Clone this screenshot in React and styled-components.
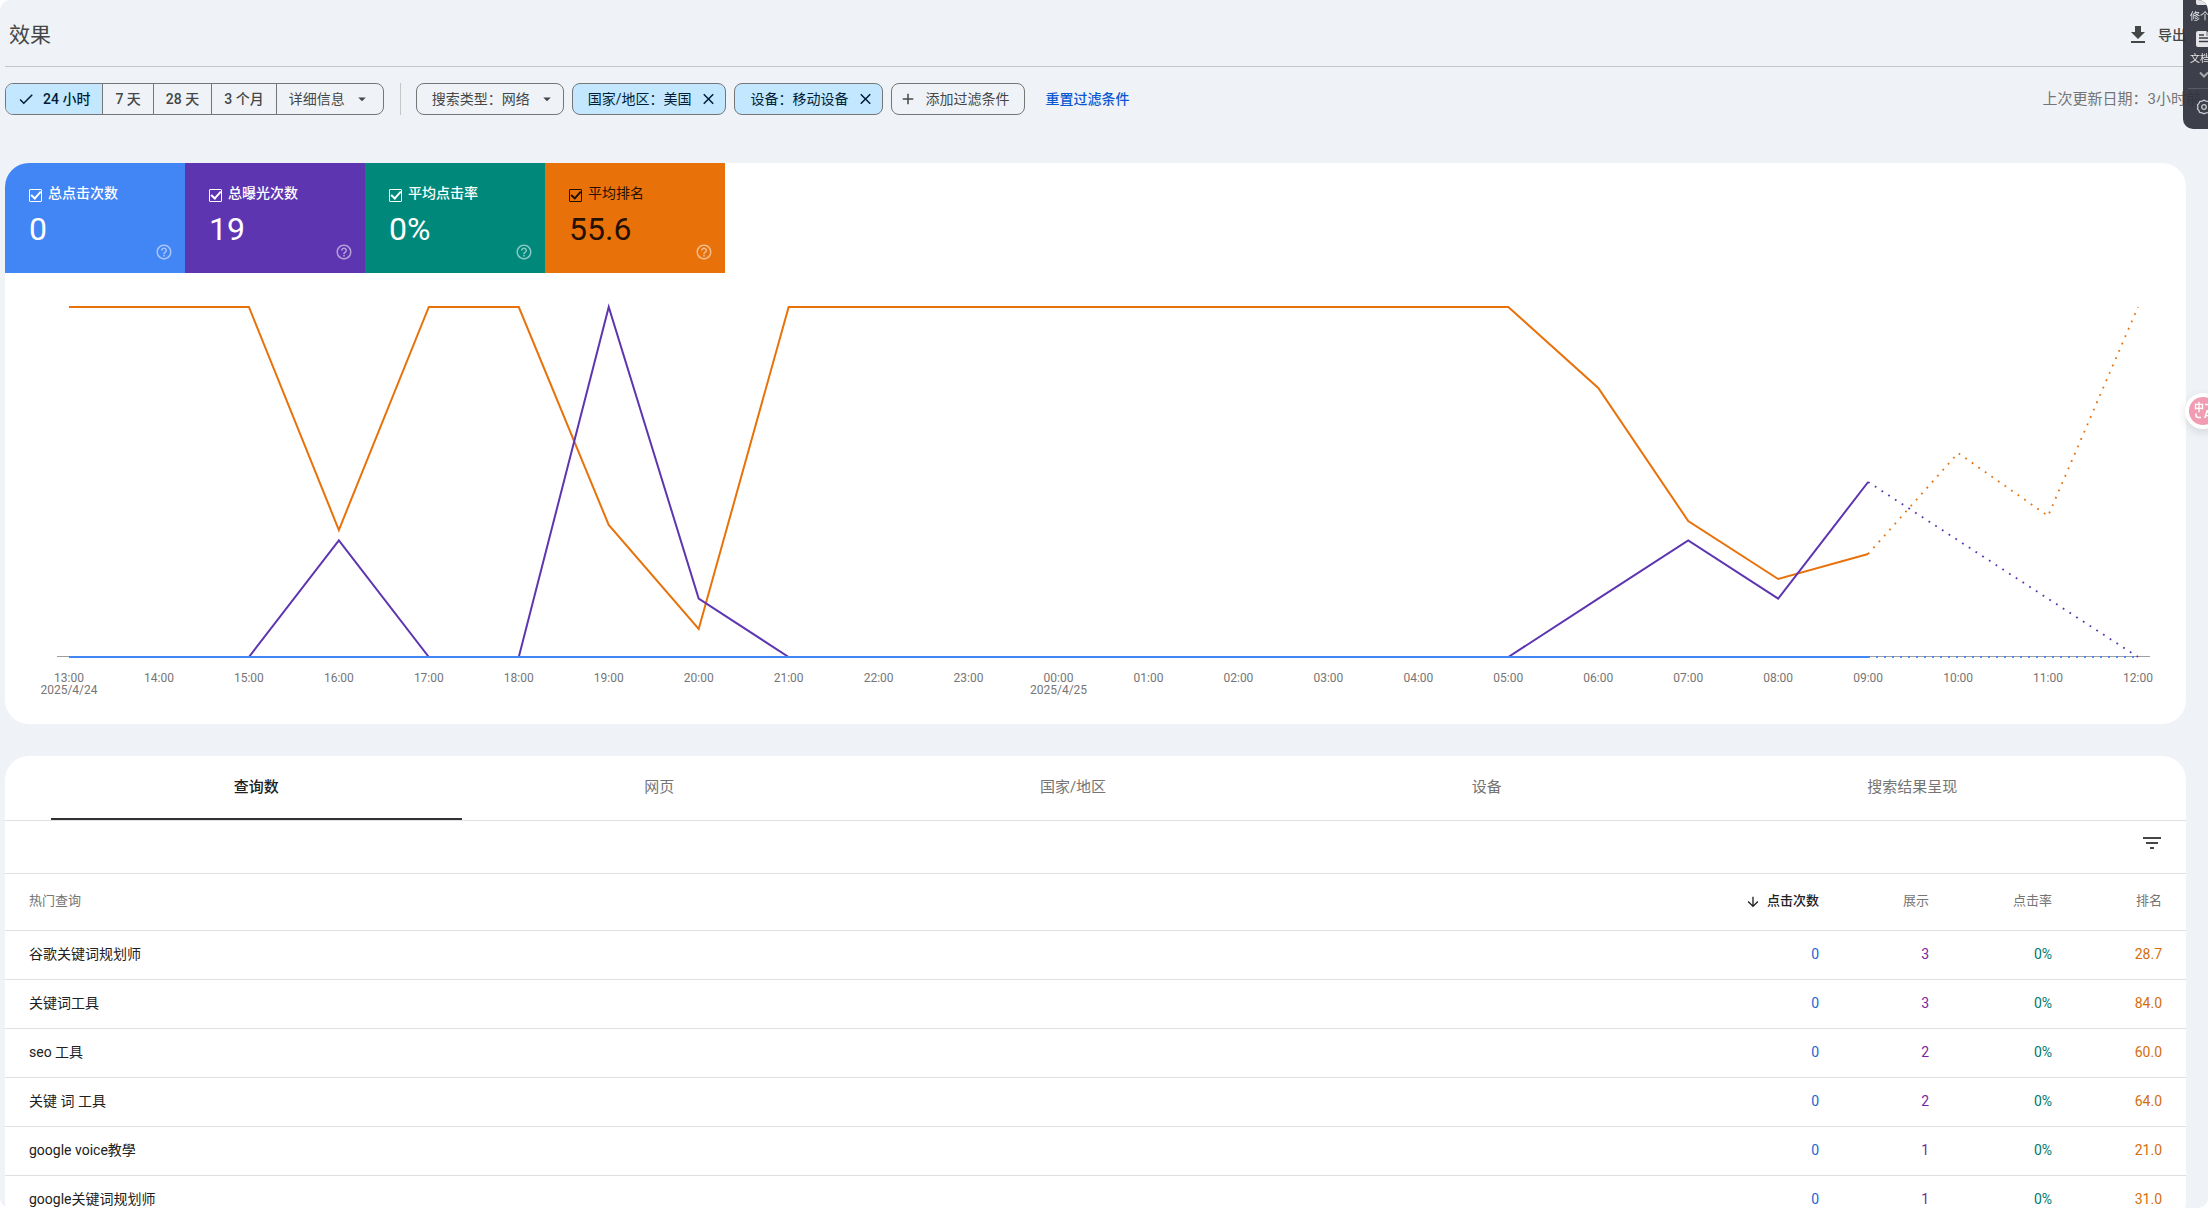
import React from "react";
import styled, { createGlobalStyle } from "styled-components";

const GlobalStyle = createGlobalStyle`
  * {
    box-sizing: border-box;
  }

  body {
    margin: 0;
    background: #fff;
    color: #1f1f1f;
    font-family: Roboto, "Noto Sans CJK SC", sans-serif;
    font-size: 14px;
    line-height: 20px;
    overflow: hidden;
  }

  button, input {
    font: inherit;
    color: inherit;
  }
`;

const Page = styled.main`
  height: 100vh;
  overflow: hidden;
  padding: 0 22px 0 5px;
  border-radius: 10px;
  background: #eff3f8;
`;

const Header = styled.header`
  display: flex;
  align-items: center;
  justify-content: space-between;
  height: 67px;
  padding: 4px 0 0 4px;
  border-bottom: 1px solid #c4c7c5;
  color: #444746;
`;

const Title = styled.h1`
  margin: 0;
  font-size: 21px;
  font-weight: 400;
`;

const ExportButton = styled.button`
  display: flex;
  align-items: center;
  gap: 8px;
  padding: 0;
  border: none;
  background: none;
  font-weight: 500;
`;

const Toolbar = styled.div`
  display: flex;
  align-items: center;
  padding-top: 16px;
  color: #444746;
`;

const Segments = styled.div`
  display: flex;
  height: 32px;
  border: 1px solid #747775;
  border-radius: 8px;
  overflow: hidden;
`;

const Segment = styled.button`
  display: flex;
  align-items: center;
  gap: 8px;
  padding: 0 12px;
  border: none;
  border-right: 1px solid #747775;
  background: ${(props) => (props.$active ? "#c2e7ff" : "transparent")};
  color: ${(props) => (props.$active ? "#001d35" : "inherit")};
  font-weight: 500;

  &:first-child {
    padding-left: 11px;
  }

  &:last-child {
    border-right: none;
    font-weight: 400;
  }
`;

const Divider = styled.div`
  width: 1px;
  height: 32px;
  margin: 0 15px 0 16px;
  background: #c4c7c5;
`;

const Chips = styled.div`
  display: flex;
  gap: 8px;
`;

const Chip = styled.button`
  display: flex;
  align-items: center;
  gap: 8px;
  height: 32px;
  padding: ${(props) => (props.$lead ? "0 15px 0 7px" : "0 7px 0 15px")};
  border: 1px solid #747775;
  border-radius: 8px;
  background: ${(props) => (props.$active ? "#c2e7ff" : "transparent")};
  color: ${(props) => (props.$active ? "#001d35" : "inherit")};

  svg {
    width: ${(props) => (props.$active ? "19px" : "18px")};
  }
`;

const ResetLink = styled.a`
  margin-left: 20px;
  color: #0b57d0;
  font-weight: 500;
  text-decoration: none;
`;

const Updated = styled.span`
  margin: 0 -15px 0 auto;
  color: #757575;
  font-size: 15px;
`;

const Card = styled.section`
  margin-top: ${(props) => props.$top};
  border-radius: 24px;
  background: #fff;
  overflow: hidden;
`;

const Metrics = styled.div`
  display: flex;
`;

const Metric = styled.label`
  display: grid;
  grid-template-columns: 1fr auto;
  grid-template-rows: 20px 40px 18px;
  width: 180px;
  height: 110px;
  padding: 20px 12px 0 24px;
  background: ${(props) => props.$color};
  color: ${(props) => (props.$dark ? "rgba(0, 0, 0, 0.87)" : "#fff")};
`;

const MetricName = styled.span`
  grid-column: 1 / 3;
  display: flex;
  align-items: center;
  gap: 6px;
  font-weight: ${(props) => (props.$dark ? 400 : 500)};
`;

const Check = styled.input`
  appearance: none;
  display: grid;
  place-items: center;
  width: 13px;
  height: 13px;
  margin: 4px 0 0;
  border: 1px solid currentColor;
  border-radius: 1px;

  &:checked::before {
    content: "";
    width: 8px;
    height: 4px;
    border: solid currentColor;
    border-width: 0 0 2px 2px;
    transform: translateY(-1px) rotate(-48deg);
  }
`;

const MetricValue = styled.span`
  grid-column: 1 / 3;
  align-self: end;
  font-size: 32px;
  line-height: 28px;
`;

const Help = styled.svg`
  grid-column: 2;
  color: rgba(255, 255, 255, 0.54);
`;

const Chart = styled.svg`
  display: block;
  width: 100%;
  height: auto;
`;

const AxisLabel = styled.text`
  fill: #757575;
  font-size: 12px;
  text-anchor: middle;
`;

const Tabs = styled.div`
  display: flex;
  height: 65px;
  padding: 0 46px;
  border-bottom: 1px solid #e0e0e0;
`;

const Tab = styled.button`
  flex: 1 1 auto;
  padding: 0;
  border: none;
  border-bottom: 2px solid ${(props) => (props.$active ? "#303134" : "transparent")};
  background: none;
  color: ${(props) => (props.$active ? "#212121" : "#757575")};
  font-size: 15px;
  font-weight: ${(props) => (props.$active ? 500 : 400)};
`;

const TableBar = styled.div`
  display: flex;
  justify-content: flex-end;
  align-items: center;
  height: 53px;
  padding: 0 22px 8px;
  border-bottom: 1px solid #e0e0e0;
`;

const IconButton = styled.button`
  display: flex;
  padding: 0;
  border: none;
  background: none;
  color: #444746;
`;

const Table = styled.table`
  width: 100%;
  border-collapse: separate;
  border-spacing: 0;
`;

const HeadCell = styled.th`
  width: ${(props) => props.$width || "auto"};
  height: 57px;
  padding: 0 24px 2px;
  border-bottom: 1px solid #e0e0e0;
  color: ${(props) => (props.$sorted ? "#212121" : "#757575")};
  font-size: 13px;
  font-weight: ${(props) => (props.$sorted ? 500 : 400)};
  text-align: ${(props) => (props.$width ? "right" : "left")};

  svg {
    margin-right: 6px;
    vertical-align: middle;
  }
`;

const Cell = styled.td`
  height: 49px;
  padding: 0 24px 2px;
  border-bottom: 1px solid #e0e0e0;
  color: ${(props) => props.$color || "#212121"};
  text-align: ${(props) => (props.$color ? "right" : "left")};
`;

const SidePanel = styled.aside`
  position: fixed;
  top: 0;
  right: 0;
  width: 25px;
  height: 129px;
  padding-left: 5px;
  border-radius: 0 10px 0 10px;
  background: rgba(47, 48, 61, 0.93);
  color: #e8e8ea;
  overflow: hidden;
`;

const PanelItem = styled.button`
  display: block;
  padding: 0;
  border: none;
  background: none;
  font-size: 10px;
  line-height: 14px;
  white-space: nowrap;

  svg {
    display: block;
    margin: 0 0 5px 8px;
  }
`;

const PanelRule = styled.hr`
  margin: 5px 0 10px;
  border: none;
  border-top: 1px solid #5a5b66;
`;

const Translate = styled.button`
  position: fixed;
  top: 393px;
  right: -13px;
  display: grid;
  place-items: center;
  width: 36px;
  height: 36px;
  padding: 0;
  border: none;
  border-radius: 50%;
  background: #fff;
  box-shadow: 0 3px 10px rgba(0, 0, 0, 0.12);
`;

const metrics = [
  { name: "总点击次数", value: "0", color: "#4285f4" },
  { name: "总曝光次数", value: "19", color: "#5e35b1" },
  { name: "平均点击率", value: "0%", color: "#00897b" },
  { name: "平均排名", value: "55.6", color: "#e8710a", dark: true },
];

const tabs = ["查询数", "网页", "国家/地区", "设备", "搜索结果呈现"];

const rows = [
  ["谷歌关键词规划师", "0", "3", "0%", "28.7"],
  ["关键词工具", "0", "3", "0%", "84.0"],
  ["seo 工具", "0", "2", "0%", "60.0"],
  ["关键 词 工具", "0", "2", "0%", "64.0"],
  ["google voice教學", "0", "1", "0%", "21.0"],
  ["google关键词规划师", "0", "1", "0%", "31.0"],
];

const cellColors = [null, "#1967d2", "#7b1fa2", "#00796b", "#d56e0c"];

// y coordinates inside the chart
const TOP = 34;
const AXIS = 384;
const position = [
  34, 34, 34, 257, 34, 34, 252, 356, 34, 34, 34, 34, 34, 34, 34, 34, 34, 115,
  248, 306, 281, 180, 243, 34,
];
const impressions = [
  0, 0, 0, 2, 0, 0, 6, 1, 0, 0, 0, 0, 0, 0, 0, 0, 0, 1, 2, 1, 3, 2, 1, 0,
].map((n) => AXIS - (n * (AXIS - TOP)) / 6);
const clicks = position.map(() => AXIS);
const LAST_FINAL = 20;

const xOf = (i) => 64 + (i * 2069) / 23;

const Line = ({ data, color }) => {
  const points = data.map((y, i) => `${xOf(i)},${y}`);
  return (
    <g fill="none" stroke={color} strokeWidth="2">
      <polyline points={points.slice(0, LAST_FINAL + 1).join(" ")} />
      <polyline
        points={points.slice(LAST_FINAL).join(" ")}
        strokeWidth="1.8"
        strokeDasharray="1.8 6.2"
      />
    </g>
  );
};

const hourLabel = (i) => `${String((13 + i) % 24).padStart(2, "0")}:00`;

const PerformanceChart = () => (
  <Chart viewBox="0 0 2181 451" role="img" aria-label="效果">
    <path d="M52 383.5H2145" stroke="#9e9e9e" />
    <Line data={position} color="#e8710a" />
    <Line data={impressions} color="#5e35b1" />
    <Line data={clicks} color="#4285f4" />
    {position.map((_, i) => (
      <AxisLabel key={i} x={xOf(i)} y="409">
        {hourLabel(i)}
      </AxisLabel>
    ))}
    <AxisLabel x={xOf(0)} y="421">2025/4/24</AxisLabel>
    <AxisLabel x={xOf(11)} y="421">2025/4/25</AxisLabel>
  </Chart>
);

const Icon = ({ d, size = 18 }) => (
  <svg width={size} height={size} viewBox="0 0 24 24" fill="currentColor" aria-hidden="true">
    <path d={d} />
  </svg>
);

const CHECK = "M9 16.17 4.83 12l-1.42 1.41L9 19 21 7l-1.41-1.41z";
const CARET = "M7 10l5 5 5-5z";
const CLOSE = "M19 6.41 17.59 5 12 10.59 6.41 5 5 6.41 10.59 12 5 17.59 6.41 19 12 13.41 17.59 19 19 17.59 13.41 12z";
const PLUS = "M19 13h-6v6h-2v-6H5v-2h6V5h2v6h6z";
const DOWNLOAD = "M19 9h-4V3H9v6H5l7 7 7-7zM5 18v2h14v-2H5z";
const FILTER = "M10 18h4v-2h-4v2zM3 6v2h18V6H3zm3 7h12v-2H6v2z";
const ARROW = "M20 12l-1.41-1.41L13 16.17V4h-2v12.17l-5.58-5.59L4 12l8 8 8-8z";
const HELP = "M11 18h2v-2h-2v2zm1-16C6.48 2 2 6.48 2 12s4.48 10 10 10 10-4.48 10-10S17.52 2 12 2zm0 18c-4.41 0-8-3.59-8-8s3.59-8 8-8 8 3.59 8 8-3.59 8-8 8zm0-14c-2.21 0-4 1.79-4 4h2c0-1.1.9-2 2-2s2 .9 2 2c0 2-3 1.75-3 5h2c0-2.25 3-2.5 3-5 0-2.21-1.79-4-4-4z";

const ToolPanel = () => (
  <SidePanel>
    <PanelItem>
      <svg width="16" height="5" viewBox="0 0 16 5" aria-hidden="true">
        <path d="M0 0h16v5H2a2 2 0 0 1-2-2z" fill="#e4e4e6" />
      </svg>
      修个
    </PanelItem>
    <PanelItem>
      <svg width="16" height="23" viewBox="0 0 16 23" aria-hidden="true">
        <path d="M2 7h8l6 5v11H2a2 2 0 0 1-2-2V9a2 2 0 0 1 2-2z" fill="#e4e4e6" />
        <path d="M3 11h5M3 14h9M3 17.5h10" stroke="#3b3c4a" strokeWidth="1.5" />
        <path d="M10 7v5h6" fill="#a9aab2" />
      </svg>
      文档
    </PanelItem>
    <PanelItem aria-label="展开">
      <svg width="16" height="12" viewBox="0 0 16 12" fill="none" stroke="#a6a6ad" strokeWidth="2" aria-hidden="true">
        <path d="M4 6.5 8 10.5 12 6.5" />
      </svg>
    </PanelItem>
    <PanelRule />
    <PanelItem aria-label="设置">
      <svg width="16" height="16" viewBox="0 0 16 16" fill="none" stroke="#c9c9ce" strokeWidth="1.3" aria-hidden="true">
        <path d="M6 2.200 8 1.200l2 1 2.300.3.9 2.200 1.300 1.300-.4 2 .4 2-1.300 1.300-.9 2.200-2.300.3-2 1-2-1-2.300-.3-.9-2.200L1.500 10l.4-2-.4-2 1.300-1.300.9-2.200z" />
        <circle cx="8" cy="8" r="2.3" />
      </svg>
    </PanelItem>
  </SidePanel>
);

const TranslateLogo = () => (
  <svg width="28" height="28" viewBox="0 0 28 28" aria-hidden="true">
    <circle cx="14" cy="14" r="14" fill="#f19cb3" />
    <g fill="#fff" fontSize="10" fontWeight="700">
      <text x="5" y="14">中</text>
      <text x="15" y="21">A</text>
    </g>
    <path d="M7 16.5v1.5a2.500 2.500 0 0 0 2.500 2.500H12M16 7.500h3a2.500 2.500 0 0 1 2.500 2.500v2" fill="none" stroke="#fff" strokeWidth="1.6" />
  </svg>
);

const App = () => {
  return (
    <>
      <GlobalStyle />
      <Page>
        <Header>
          <Title>效果</Title>
          <ExportButton>
            <Icon d={DOWNLOAD} size={24} />
            导出
          </ExportButton>
        </Header>

        <Toolbar>
          <Segments>
            <Segment $active>
              <Icon d={CHECK} />
              24 小时
            </Segment>
            <Segment>7 天</Segment>
            <Segment>28 天</Segment>
            <Segment>3 个月</Segment>
            <Segment>
              详细信息
              <Icon d={CARET} />
            </Segment>
          </Segments>
          <Divider />
          <Chips>
            <Chip>
              搜索类型：网络
              <Icon d={CARET} />
            </Chip>
            <Chip $active>
              国家/地区：美国
              <Icon d={CLOSE} />
            </Chip>
            <Chip $active>
              设备：移动设备
              <Icon d={CLOSE} />
            </Chip>
            <Chip $lead>
              <Icon d={PLUS} />
              添加过滤条件
            </Chip>
          </Chips>
          <ResetLink href="#reset">重置过滤条件</ResetLink>
          <Updated>上次更新日期：3小时前</Updated>
        </Toolbar>

        <Card $top="48px">
          <Metrics>
            {metrics.map((m) => (
              <Metric key={m.name} $color={m.color} $dark={m.dark}>
                <MetricName $dark={m.dark}>
                  <Check type="checkbox" defaultChecked />
                  {m.name}
                </MetricName>
                <MetricValue>{m.value}</MetricValue>
                <Help width="18" height="18" viewBox="0 0 24 24" fill="currentColor">
                  <path d={HELP} />
                </Help>
              </Metric>
            ))}
          </Metrics>
          <PerformanceChart />
        </Card>

        <Card $top="32px">
          <Tabs role="tablist">
            {tabs.map((tab, i) => (
              <Tab key={tab} role="tab" aria-selected={i === 0} $active={i === 0}>
                {tab}
              </Tab>
            ))}
          </Tabs>
          <TableBar>
            <IconButton aria-label="过滤">
              <Icon d={FILTER} size={24} />
            </IconButton>
          </TableBar>
          <Table>
            <thead>
              <tr>
                <HeadCell>热门查询</HeadCell>
                <HeadCell $width="140px" $sorted>
                  <Icon d={ARROW} size={16} />
                  点击次数
                </HeadCell>
                <HeadCell $width="110px">展示</HeadCell>
                <HeadCell $width="123px">点击率</HeadCell>
                <HeadCell $width="110px">排名</HeadCell>
              </tr>
            </thead>
            <tbody>
              {rows.map((row) => (
                <tr key={row[0]}>
                  {row.map((value, i) => (
                    <Cell key={i} $color={cellColors[i]}>
                      {value}
                    </Cell>
                  ))}
                </tr>
              ))}
            </tbody>
          </Table>
        </Card>
      </Page>

      <ToolPanel />
      <Translate aria-label="翻译">
        <TranslateLogo />
      </Translate>
    </>
  );
};

export default App;
